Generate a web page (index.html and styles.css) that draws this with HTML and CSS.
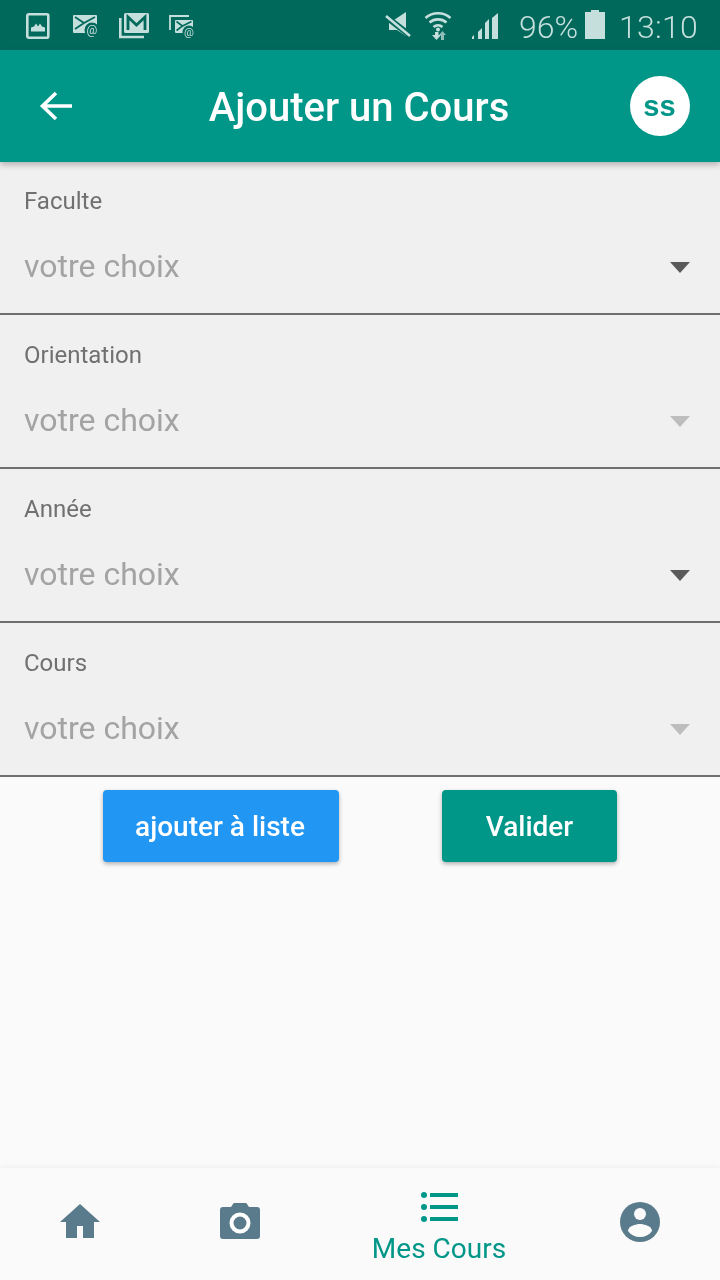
FILE: index.html
```html
<!DOCTYPE html>
<html lang="fr">
<head>
<meta charset="utf-8">
<title>Ajouter un Cours</title>
<link rel="stylesheet" href="styles.css">
</head>
<body>
<div class="app">
  <div class="status">
    <div class="status-left">
      <svg class="si-1" width="31" height="28" viewBox="0 0 31 28"><rect x="3.300" y="3.300" width="21" height="23.400" rx="1.500" fill="none" stroke="#c5dfdc" stroke-width="2.600"/><path d="M7 20.500v-4l3-1 2-3 2 3 2-3 2 3 3 1v4z" fill="#c5dfdc"/></svg>
      <svg width="28" height="28" viewBox="0 0 28 28"><path d="M1 4h22a1 1 0 0 1 1 1v17H1a1 1 0 0 1-1-1V5a1 1 0 0 1 1-1z" fill="#c5dfdc"/><path d="M2 6l9 6-9 6M22 6l-11 6" fill="none" stroke="#00695c" stroke-width="1.800"/><circle cx="19" cy="19" r="7.500" fill="#00695c"/><text class="at" x="19" y="23" font-size="12" text-anchor="middle">@</text></svg>
      <svg width="32" height="28" viewBox="0 0 32 28"><path d="M1.300 7v19H25" fill="none" stroke="#c5dfdc" stroke-width="2.600"/><rect x="5" y="2" width="25" height="20" rx="1.500" fill="#c5dfdc"/><path d="M9 19V6l8.500 8L26 6v13" fill="none" stroke="#00695c" stroke-width="2.800"/></svg>
      <svg width="28" height="28" viewBox="0 0 28 28"><path d="M1 19V5h19" fill="none" stroke="#c5dfdc" stroke-width="1.800"/><rect x="6" y="9" width="18" height="13" rx="1" fill="#c5dfdc"/><path d="M7.500 10.500l6 4.500-6 4.500M22.500 10.500l-9 4.500" fill="none" stroke="#00695c" stroke-width="1.600"/><circle cx="20" cy="21" r="6.500" fill="#00695c"/><text class="at" x="20" y="25" font-size="11" text-anchor="middle">@</text></svg>
    </div>
    <div class="status-right">
      <svg class="mute" width="28" height="28" viewBox="0 0 28 28"><path d="M5 9h5l12-8v24l-9-6H5z" fill="#c5dfdc"/><path d="M1 5l26 20" stroke="#00695c" stroke-width="6"/><path d="M2 5l24 20" stroke="#c5dfdc" stroke-width="2.600"/></svg>
      <svg class="wifi" width="30" height="30" viewBox="0 0 30 30"><path d="M1.500 8a19 19 0 0 1 25 0M5.500 12.500a13 13 0 0 1 17 0M9.500 17a7 7 0 0 1 9 0" fill="none" stroke="#c5dfdc" stroke-width="2.600"/><circle cx="14" cy="19.500" r="2" fill="#c5dfdc"/><path d="M11 22h3.500v3H17l-4.500 5-4.500-5h3z" fill="#c5dfdc"/><path d="M17 30v-5h-2l3.500-4 3.500 4h-2v5z" fill="#8fbdb7"/></svg>
      <svg class="signal" width="28" height="30" viewBox="0 0 28 30"><path d="M1 29v-2l2-2v4zM7 29v-7l4-4v11zM14 29V13l4-4v20zM21 29V8l6-5v26z" fill="#c5dfdc"/></svg>
      <span class="pct">96%</span>
      <svg class="batt" width="20" height="30" viewBox="0 0 20 30"><path d="M6 0h8v2h6v27H0V2h6z" fill="#c5dfdc"/></svg>
      <span class="clock">13:10</span>
    </div>
  </div>

  <header class="appbar">
    <svg class="back" width="36" height="32" viewBox="0 0 36 32"><path d="M34 16H5M18 3L4.500 16 18 29" fill="none" stroke="#fff" stroke-width="3.600"/></svg>
    <h1 class="title">Ajouter un Cours</h1>
    <div class="avatar">ss</div>
  </header>

  <main class="form">
    <section class="field">
      <label class="label">Faculte</label>
      <div class="select"><span class="hint">votre choix</span><span class="caret"></span></div>
    </section>
    <section class="field">
      <label class="label">Orientation</label>
      <div class="select"><span class="hint">votre choix</span><span class="caret off"></span></div>
    </section>
    <section class="field">
      <label class="label">Année</label>
      <div class="select"><span class="hint">votre choix</span><span class="caret"></span></div>
    </section>
    <section class="field">
      <label class="label">Cours</label>
      <div class="select"><span class="hint">votre choix</span><span class="caret off"></span></div>
    </section>
    <div class="actions">
      <button class="btn blue">ajouter à liste</button>
      <button class="btn teal">Valider</button>
    </div>
  </main>

  <nav class="nav">
    <div class="tab">
      <svg width="40" height="34" viewBox="0 0 40 34"><path d="M20 0L40 18H34V34H23V22H17V34H6V18H0z" fill="#5a7b8c"/></svg>
    </div>
    <div class="tab">
      <svg width="40" height="36" viewBox="0 0 40 36"><path d="M3 4h8l2-3a2 2 0 0 1 2-1h10a2 2 0 0 1 2 1l2 3h8a3 3 0 0 1 3 3v26a3 3 0 0 1-3 3H3a3 3 0 0 1-3-3V7a3 3 0 0 1 3-3z" fill="#5a7b8c"/><circle cx="20" cy="20" r="8.500" fill="none" stroke="#fff" stroke-width="4"/></svg>
    </div>
    <div class="tab active">
      <svg class="list-icon" width="38" height="30" viewBox="0 0 38 30"><circle cx="3" cy="3" r="3" fill="#009688"/><circle cx="3" cy="15" r="3" fill="#009688"/><circle cx="3" cy="27" r="3" fill="#009688"/><path d="M9 1h28v4H9zM9 13h28v4H9zM9 25h28v4H9z" fill="#009688"/></svg>
      <span class="tab-label">Mes Cours</span>
    </div>
    <div class="tab profile">
      <svg width="40" height="40" viewBox="0 0 40 40"><circle cx="20" cy="20" r="20" fill="#5a7b8c"/><circle cx="20" cy="12" r="6" fill="#fafafa"/><path d="M8 29c0-5 8-7 12-7s12 2 12 7c-3 4-7 6-12 6s-9-2-12-6z" fill="#fafafa"/></svg>
    </div>
  </nav>
</div>
</body>
</html>
```
FILE: styles.css
```css
* { box-sizing: border-box; }
html, body { margin: 0; padding: 0; }
body { background: #fafafa; font-family: Roboto, "Liberation Sans", sans-serif; }
.app { width: 720px; height: 1280px; display: flex; flex-direction: column; overflow: hidden; will-change: transform; }

.status { height: 50px; background: #00695c; display: flex; justify-content: space-between; align-items: center; padding: 0 22px 0 24px; color: #c5dfdc; flex: none; }
.status-left { display: flex; align-items: center; gap: 18px; }
.at { fill: #c5dfdc; font-family: Roboto, sans-serif; }
.status-right { display: flex; align-items: center; }
.mute { margin-right: 12px; }
.wifi { margin-right: 17px; }
.signal { margin-right: 20px; }
.pct { font-size: 32px; font-weight: 300; margin-right: 7px; padding-top: 3px; }
.batt { margin-right: 14px; }
.clock { font-size: 32px; font-weight: 300; letter-spacing: 0.25px; padding-top: 3px; }

.appbar { height: 112px; background: #009688; display: flex; align-items: center; justify-content: space-between; padding: 0 30px 0 38px; box-shadow: 0 3px 6px rgba(0,0,0,.25); position: relative; z-index: 2; flex: none; }
.title { margin: 0 0 0 14px; padding-top: 4px; color: #fff; font-size: 40px; font-weight: 500; line-height: 1; }
.avatar { width: 60px; height: 60px; border-radius: 50%; background: #fff; color: #009688; font-family: "Liberation Sans", sans-serif; font-weight: 700; font-size: 29px; display: flex; align-items: center; justify-content: center; padding: 0 1px 0 0; }

.form { flex: 1; display: flex; flex-direction: column; margin-top: -1px; }
.field { height: 154px; background: #f0f0f0; border-bottom: 2px solid #6f6f6f; padding: 25px 30px 0 24px; }
.label { display: block; font-size: 24px; line-height: 30px; color: #707070; }
.select { display: flex; align-items: center; justify-content: space-between; margin-top: 30px; height: 40px; }
.hint { font-size: 32px; line-height: 40px; color: #a3a3a3; }
.caret { width: 0; height: 0; margin-top: 2px; border-left: 10px solid transparent; border-right: 10px solid transparent; border-top: 11px solid #5a5a5a; }
.caret.off { border-top-color: #bdbdbd; }

.actions { display: flex; padding: 13px 103px 0 103px; justify-content: space-between; }
.btn { height: 72px; border: 0; border-radius: 4px; color: #fff; font-family: Roboto, sans-serif; font-size: 28px; font-weight: 500; box-shadow: 0 2px 4px rgba(0,0,0,.3); padding: 0; }
.blue { background: #2196f3; width: 236px; padding-right: 2px; }
.teal { background: #009688; width: 175px; }

.nav { height: 112px; flex: none; background: #fafafa; box-shadow: 0 -2px 4px rgba(0,0,0,.04); position: relative; display: grid; grid-template-columns: 160px 160px 238px 162px; }
.tab { display: flex; flex-direction: column; align-items: center; justify-content: center; padding-bottom: 6px; }
.tab.active { justify-content: flex-start; padding: 24px 0 0; }
.list-icon { margin-left: 2px; }
.tab.profile { padding: 0 0 4px 2px; }
.tab-label { font-size: 28px; line-height: 34px; color: #009688; margin-top: 10px; }
```
